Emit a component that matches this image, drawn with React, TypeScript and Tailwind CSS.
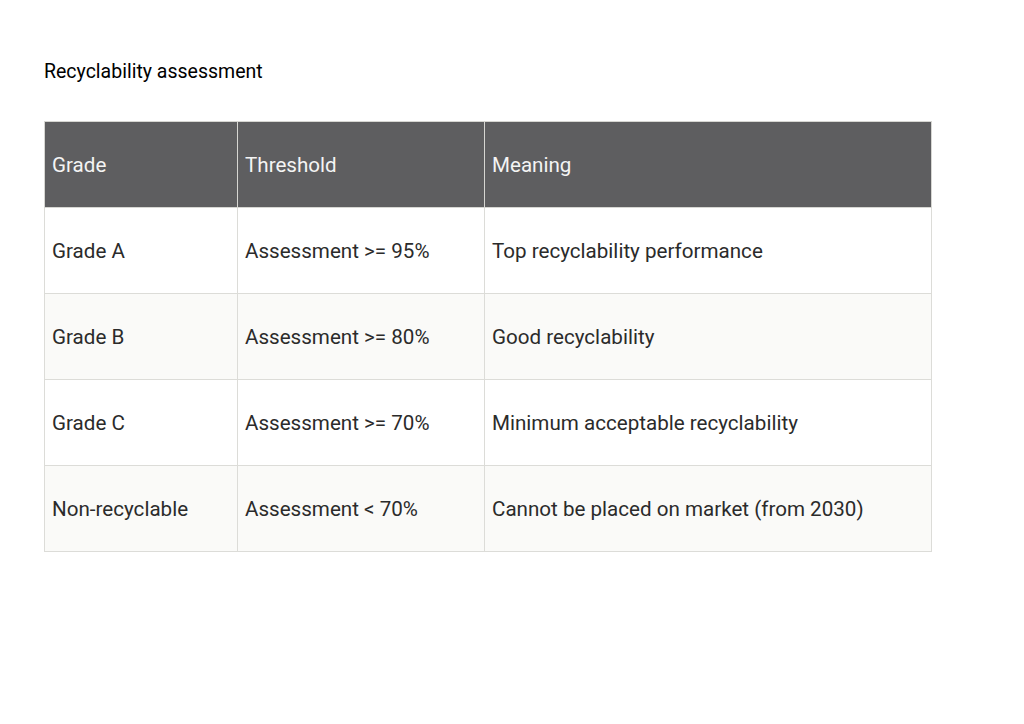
const rows = [
  { grade: 'Grade A', threshold: 'Assessment >= 95%', meaning: 'Top recyclability performance' },
  { grade: 'Grade B', threshold: 'Assessment >= 80%', meaning: 'Good recyclability' },
  { grade: 'Grade C', threshold: 'Assessment >= 70%', meaning: 'Minimum acceptable recyclability' },
  { grade: 'Non-recyclable', threshold: 'Assessment < 70%', meaning: 'Cannot be placed on market (from 2030)' },
]

export default function App() {
  return (
    <div className="min-h-screen bg-white font-['Roboto',sans-serif]">
      <div className="pl-[44px] pt-[59px]">
        <h1 className="text-[19.5px] leading-[26px] text-black">Recyclability assessment</h1>
        <table className="mt-[36px] w-[887px] table-fixed border-collapse text-[20.6px] leading-[24px] text-[#2b2b2b]">
          <colgroup>
            <col className="w-[193px]" />
            <col className="w-[247px]" />
            <col className="w-[447px]" />
          </colgroup>
          <thead>
            <tr className="bg-[#5e5e60] text-[#f4f4f4]">
              <th className="h-[86px] border border-[#d6d6d2] px-[7px] text-left font-normal">Grade</th>
              <th className="h-[86px] border border-[#d6d6d2] px-[7px] text-left font-normal">Threshold</th>
              <th className="h-[86px] border border-[#d6d6d2] px-[7px] text-left font-normal">Meaning</th>
            </tr>
          </thead>
          <tbody>
            {rows.map((r, i) => (
              <tr key={r.grade} className={i % 2 === 1 ? 'bg-[#fafaf8]' : 'bg-white'}>
                <td className="h-[86px] border border-[#dcdcd8] px-[7px]">{r.grade}</td>
                <td className="h-[86px] border border-[#dcdcd8] px-[7px]">{r.threshold}</td>
                <td className="h-[86px] border border-[#dcdcd8] px-[7px]">{r.meaning}</td>
              </tr>
            ))}
          </tbody>
        </table>
      </div>
    </div>
  )
}
